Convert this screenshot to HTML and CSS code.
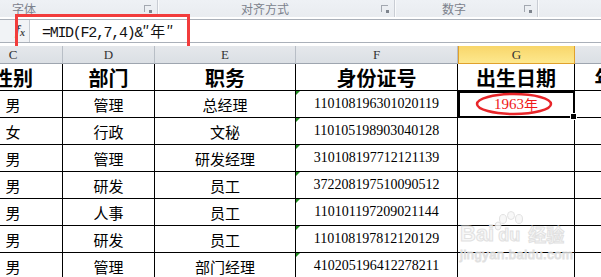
FILE: index.html
```html
<!DOCTYPE html>
<html lang="zh-CN">
<head>
    <meta charset="UTF-8">
    <meta name="viewport" content="width=device-width, initial-scale=1.0">
    <title>MID 出生日期</title>
    <link rel="stylesheet" href="styles.css">
</head>
<body>
    <!-- Ribbon group labels -->
    <div class="ribbon">
        <div class="group g-font"><span>字体</span><i class="launcher"></i></div>
        <div class="group g-align"><span>对齐方式</span><i class="launcher"></i></div>
        <div class="group g-num"><span>数字</span><i class="launcher"></i></div>
        <div class="group g-rest"></div>
    </div>

    <!-- Formula bar -->
    <div class="formula-bar">
        <div class="fx"><i>f</i><sub>x</sub></div>
        <div class="formula-input"><span class="ascii">=MID(F2,7,4)&amp;</span><span class="cjk">″年″</span></div>
        <div class="mark-box"></div>
    </div>

    <!-- Sheet -->
    <div class="sheet">
        <div class="grid">
            <div class="colhead">C</div>
            <div class="colhead">D</div>
            <div class="colhead">E</div>
            <div class="colhead">F</div>
            <div class="colhead active">G</div>
            <div class="colhead"></div>

            <div class="cell title">性别</div>
            <div class="cell title">部门</div>
            <div class="cell title">职务</div>
            <div class="cell title">身份证号</div>
            <div class="cell title">出生日期</div>
            <div class="cell title">年龄</div>

            <div class="cell">男</div><div class="cell">管理</div><div class="cell">总经理</div>
            <div class="cell num">110108196301020119</div>
            <div class="cell result selected">1963<span class="nian">年</span><svg class="ring" width="80" height="24" viewBox="0 0 80 24"><ellipse cx="39" cy="12" rx="37" ry="10" fill="none" stroke="#e8262a" stroke-width="2.5"/></svg><i class="handle"></i></div>
            <div class="cell"></div>

            <div class="cell">女</div><div class="cell">行政</div><div class="cell">文秘</div>
            <div class="cell num">110105198903040128</div><div class="cell"></div><div class="cell"></div>

            <div class="cell">男</div><div class="cell">管理</div><div class="cell">研发经理</div>
            <div class="cell num">310108197712121139</div><div class="cell"></div><div class="cell"></div>

            <div class="cell">男</div><div class="cell">研发</div><div class="cell">员工</div>
            <div class="cell num">372208197510090512</div><div class="cell"></div><div class="cell"></div>

            <div class="cell">男</div><div class="cell">人事</div><div class="cell">员工</div>
            <div class="cell num">110101197209021144</div><div class="cell"></div><div class="cell"></div>

            <div class="cell">男</div><div class="cell">研发</div><div class="cell">员工</div>
            <div class="cell num">110108197812120129</div><div class="cell"></div><div class="cell"></div>

            <div class="cell">男</div><div class="cell">管理</div><div class="cell">部门经理</div>
            <div class="cell num">410205196412278211</div><div class="cell"></div><div class="cell"></div>
        </div>

        <!-- watermark -->
        <div class="watermark">
            <div class="wm-logo">
                <span class="wm-bai">Bai</span>
                <span class="wm-paw">
                    <svg width="34" height="26" viewBox="0 0 34 26">
                        <g fill="#f7f7f7" stroke="#dedede" stroke-width="1">
                            <ellipse cx="9" cy="8" rx="3.5" ry="4.5"/>
                            <ellipse cx="17" cy="4.5" rx="3.5" ry="4"/>
                            <ellipse cx="25" cy="8" rx="3.5" ry="4.5"/>
                            <ellipse cx="4" cy="15" rx="3" ry="4"/>
                        </g>
                    </svg>
                    <span class="wm-du">du</span>
                </span>
                <span class="wm-jy">经验</span>
            </div>
            <div class="wm-url">jingyan.baidu.com</div>
        </div>
    </div>
</body>
</html>
```

FILE: styles.css
```css
body {
    margin: 0;
    width: 601px;
    height: 277px;
    overflow: hidden;
    background: #fff;
    font-family: "Noto Sans CJK SC", sans-serif;
}

/* Ribbon */
.ribbon {
    display: flex;
    height: 17px;
    background: linear-gradient(#eef1f5, #e9ecf0);
    color: #7b818c;
    font-size: 12px;
    line-height: 17px;
}

.group {
    position: relative;
    display: flex;
    align-items: center;
    border-right: 1px solid #c9cdd4;
    box-shadow: 1px 0 0 #fafbfc;
    box-sizing: border-box;
}

.g-font {
    width: 158px;
    padding-left: 12px;
}

.g-align {
    width: 237px;
    justify-content: center;
    padding-right: 22px;
}

.g-num {
    width: 143px;
    justify-content: center;
    padding-right: 24px;
}

.g-rest {
    flex: 1;
    border-right: none;
}

.launcher {
    position: absolute;
    right: 6px;
    top: 5px;
    width: 6px;
    height: 6px;
    border-left: 1px solid #a3a8b0;
    border-top: 1px solid #a3a8b0;
}

.launcher::after {
    content: "";
    position: absolute;
    right: -1px;
    bottom: -1px;
    width: 3px;
    height: 3px;
    background: #7e848d;
}

/* Formula bar */
.formula-bar {
    position: relative;
    display: flex;
    margin-top: 2px;
    height: 22px;
    border-top: 1px solid #aab0b9;
    border-bottom: 1px solid #aab0b9;
    background: #fff;
}

.fx {
    width: 30px;
    border-right: 1px solid #c5cad1;
    background: #f1f3f6;
    font-family: "Liberation Serif", serif;
    font-size: 15px;
    font-weight: bold;
    line-height: 21px;
    color: #444;
    padding-left: 15px;
    box-sizing: border-box;
}

.fx sub {
    font-size: 10px;
    font-style: italic;
    vertical-align: -1px;
}

.formula-input {
    padding-left: 12px;
    line-height: 22px;
    color: #111;
    font-size: 15px;
}

.formula-input .ascii {
    font-family: "Liberation Mono", monospace;
    letter-spacing: -1.3px;
}

.formula-input .cjk {
    font-family: "Noto Sans CJK SC", sans-serif;
    font-size: 15px;
    letter-spacing: 1px;
}

.mark-box {
    position: absolute;
    left: 15px;
    top: -6px;
    width: 175px;
    height: 38px;
    border: 3px solid #f23c3c;
    box-sizing: border-box;
}

/* Sheet */
.sheet {
    position: relative;
    margin-top: 3px;
    background: #e4e7eb;
}

.grid {
    display: grid;
    grid-template-columns: 99px 92px 141px 162px 117px 80px;
    grid-template-rows: 18px 27px repeat(7, 27px);
    margin-left: -36px;
    background: #fff;
}

.colhead {
    display: flex;
    align-items: center;
    justify-content: center;
    background: linear-gradient(#e5e8ec, #dbdfe4);
    border-right: 1px solid #b8bec6;
    border-bottom: 1px solid #9ea5af;
    font-family: "Liberation Serif", serif;
    font-size: 13px;
    color: #333;
}

.colhead.active {
    background: linear-gradient(#f8d66a, #fde88e);
    border: 1px solid #e0a12c;
    border-top: none;
    color: #333;
}

.cell {
    position: relative;
    display: flex;
    align-items: center;
    justify-content: center;
    border-right: 1px solid #000;
    border-bottom: 1px solid #000;
    font-size: 15px;
    color: #000;
}

.cell.title {
    font-weight: bold;
    font-size: 20px;
}

.cell.num {
    font-family: "Liberation Serif", serif;
    font-size: 14px;
}

.cell.num::before {
    content: "";
    position: absolute;
    left: 0;
    top: 0;
    border-top: 4px solid #1d8a1d;
    border-right: 4px solid transparent;
}

.cell.result {
    color: #f01818;
    font-family: "Liberation Serif", serif;
    font-size: 15px;
}

.cell.result .nian {
    font-family: "Noto Sans CJK SC", sans-serif;
    font-size: 14px;
}

.cell.selected {
    outline: 2px solid #000;
    outline-offset: -2px;
}

.ring {
    position: absolute;
    left: 17px;
    top: 1px;
}

.handle {
    position: absolute;
    right: -3px;
    bottom: -3px;
    width: 5px;
    height: 5px;
    background: #000;
    border: 1px solid #fff;
    z-index: 2;
}

/* Watermark */
.watermark {
    position: absolute;
    left: 460px;
    top: 165px;
    color: #f6f6f6;
    -webkit-text-stroke: 1px #dcdcdc;
    opacity: 0.85;
}

.wm-logo {
    display: flex;
    align-items: flex-end;
    height: 34px;
}

.wm-bai {
    font-family: "Liberation Sans", sans-serif;
    font-weight: bold;
    font-size: 22px;
    line-height: 22px;
}

.wm-paw {
    position: relative;
    width: 34px;
    height: 34px;
}

.wm-paw svg {
    position: absolute;
    left: 0;
    top: 0;
}

.wm-du {
    position: absolute;
    left: 4px;
    bottom: 0;
    font-family: "Liberation Sans", sans-serif;
    font-weight: bold;
    font-size: 18px;
    line-height: 20px;
}

.wm-jy {
    font-size: 18px;
    line-height: 22px;
    font-weight: bold;
}

.wm-url {
    font-family: "Liberation Sans", sans-serif;
    font-size: 13px;
    letter-spacing: 0.5px;
    margin-top: 2px;
}
```
